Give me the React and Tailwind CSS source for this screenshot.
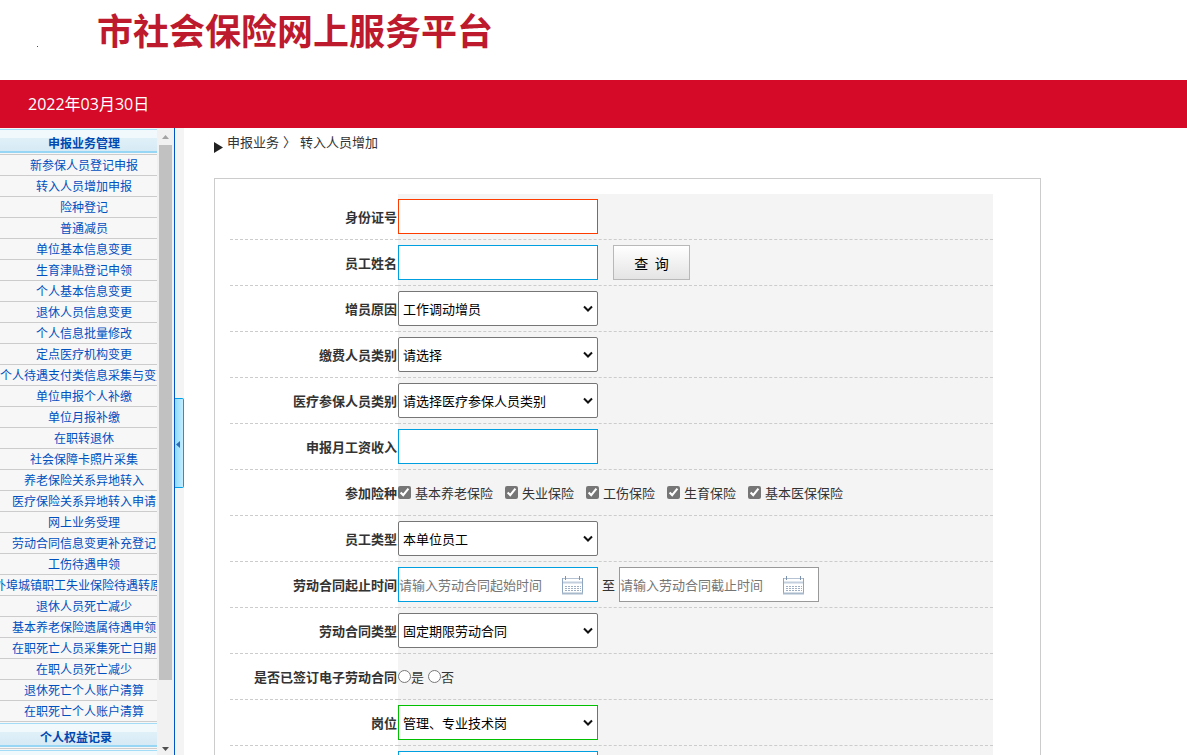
import { useState } from "react";

const menuItems = [
  "新参保人员登记申报",
  "转入人员增加申报",
  "险种登记",
  "普通减员",
  "单位基本信息变更",
  "生育津贴登记申领",
  "个人基本信息变更",
  "退休人员信息变更",
  "个人信息批量修改",
  "定点医疗机构变更",
  "个人待遇支付类信息采集与变更",
  "单位申报个人补缴",
  "单位月报补缴",
  "在职转退休",
  "社会保障卡照片采集",
  "养老保险关系异地转入",
  "医疗保险关系异地转入申请",
  "网上业务受理",
  "劳动合同信息变更补充登记",
  "工伤待遇申领",
  "外埠城镇职工失业保险待遇转原籍",
  "退休人员死亡减少",
  "基本养老保险遗属待遇申领",
  "在职死亡人员采集死亡日期",
  "在职人员死亡减少",
  "退休死亡个人账户清算",
  "在职死亡个人账户清算",
];

const insurances = ["基本养老保险", "失业保险", "工伤保险", "生育保险", "基本医保保险"];

function MenuHeader({ children, className = "" }) {
  return (
    <div className="border-b border-[#ccc] bg-[#f7f7f7] py-px">
      <button
        className={`flex h-6 w-full items-center justify-center border-t border-b-2 border-t-[#a3dcf7] border-b-[#97d7f5] bg-linear-to-b from-[#f2f9fd] from-40% via-[#e0f0f9] via-40% to-[#d6eaf5] pt-1 leading-none font-bold text-[#0048b0] ${className}`}
      >
        {children}
      </button>
    </div>
  );
}

function Sidebar() {
  return (
    <aside className="flex w-[175px] shrink-0 border-r border-[#0054c4] bg-[#f1f1f1]">
      <nav className="w-[157px] overflow-hidden text-xs">
        <div className="w-[168px]">
          <MenuHeader>申报业务管理</MenuHeader>
          <ul>
            {menuItems.map((item) => (
              <li key={item} className="h-[21px] border-b border-[#ccc] bg-[#f7f7f7]">
                <a href="#" className="flex h-5 items-center justify-center whitespace-nowrap text-[#0050c0]">
                  {item}
                </a>
              </li>
            ))}
          </ul>
          <MenuHeader className="pr-4">个人权益记录</MenuHeader>
          <MenuHeader>单位信息查询</MenuHeader>
        </div>
      </nav>
      <div className="flex flex-1 flex-col items-center">
        <svg className="h-[17px] w-[9px] shrink-0" viewBox="0 0 9 17">
          <path d="M1 11h7L4.500 7z" fill="#a3a3a3" />
        </svg>
        <div className="flex w-[13px] flex-1 flex-col">
          <div className="grow-[535] bg-[#c1c1c1]" />
          <div className="grow-[58]" />
        </div>
        <svg className="h-[17px] w-[9px] shrink-0" viewBox="0 0 9 17">
          <path d="M1 9h7L4.500 13z" fill="#505050" />
        </svg>
      </div>
    </aside>
  );
}

function Row({ label, id, children }) {
  return (
    <tr className="h-[46px]">
      <th className="w-[168px] border-b border-dashed border-[#ccc] p-0 pr-px text-right align-middle font-bold whitespace-nowrap">
        <label htmlFor={id}>{label}</label>
      </th>
      <td className="border-b border-dashed border-[#ccc] bg-[#f4f4f4] p-0 align-middle">
        <div className="flex items-center">{children}</div>
      </td>
    </tr>
  );
}

function TextBox({ id, className }) {
  return <input id={id} type="text" className={`h-[35px] w-[200px] border bg-white px-1 ${className}`} />;
}

function SelectBox({ id, options, className = "rounded-xs border-[#767676]" }) {
  return (
    <div className="relative">
      <select id={id} className={`h-[35px] w-[200px] appearance-none border bg-white px-1 text-black ${className}`}>
        {options.map((o) => (
          <option key={o}>{o}</option>
        ))}
      </select>
      <svg className="pointer-events-none absolute top-[14px] right-[5px] h-2 w-2.5" viewBox="0 0 10 8" fill="none">
        <path d="M1 1.500L5 5.500L9 1.500" stroke="#111" strokeWidth="2" />
      </svg>
    </div>
  );
}

function CalendarIcon() {
  return (
    <svg className="pointer-events-none absolute top-[9px] right-[14px] h-[19px] w-[23px]" viewBox="0 0 23 19" fill="none">
      <path d="M1 2.500H22" stroke="#b4c2d3" />
      <path d="M1 6.500H22" stroke="#c3cfdc" strokeWidth="2" />
      <path d="M1.500 2V18M21.500 2V18" stroke="#8fa5c0" />
      <path d="M1 17.500H22" stroke="#a9b9cc" strokeWidth="2" />
      <path d="M4.500 0V4M18.500 0V4" stroke="#7d93ae" />
      <path d="M4 10.500H20M4 12.500H20M4 14.500H20" stroke="#9fb0c6" strokeDasharray="2 1" />
    </svg>
  );
}

function DateBox({ id, label, placeholder, className }) {
  return (
    <div className="relative">
      <input
        id={id}
        type="text"
        aria-label={label}
        placeholder={placeholder}
        className={`h-[35px] w-[200px] border bg-white placeholder:text-[#757575] ${className}`}
      />
      <CalendarIcon />
    </div>
  );
}

function App() {
  const [checked, setChecked] = useState(insurances);
  const [signed, setSigned] = useState("");

  const toggle = (name) => {
    setChecked(checked.includes(name) ? checked.filter((c) => c !== name) : [...checked, name]);
  };

  return (
    <div className="flex h-screen flex-col overflow-hidden bg-white font-['Noto_Sans_CJK_SC',sans-serif] text-[13px] text-[#333]">
      <header className="shrink-0">
        <div className="flex h-20 items-start pt-1 pl-[37px]">
          <span className="mt-[42px] h-px w-px bg-[#be1a2e]" />
          <h1 className="ml-[59px] text-4xl leading-[50px] font-bold text-[#be1a2e]">市社会保险网上服务平台</h1>
        </div>
        <div className="flex h-12 items-center bg-[#d40a28] pl-7 font-['Open_Sans','Noto_Sans_CJK_SC',sans-serif] text-base text-white">
          2022年03月30日
        </div>
      </header>

      <div className="flex min-h-0 flex-1">
        <Sidebar />

        <div className="flex w-[9px] shrink-0 flex-col justify-center bg-[#f4f4f4] pt-0.5">
          <button
            aria-label="收起菜单"
            className="flex h-[90px] items-center rounded-r-xs border border-l-0 border-[#00a0e9] bg-linear-to-r from-[#8fdcff] to-[#c4edff] pt-1 pl-px"
          >
            <svg className="h-[7px] w-1" viewBox="0 0 4 7">
              <path d="M4 0V7L0 3.500z" fill="#2f6bb5" />
            </svg>
          </button>
        </div>

        <main className="min-w-0 flex-1 overflow-hidden px-[30px]">
          <div className="flex h-[50px] items-start gap-1 pt-1">
            <svg className="mt-2.5 h-[11px] w-[9px]" viewBox="0 0 9 11">
              <path d="M0 0V11L9 5.500z" fill="#222" />
            </svg>
            <div className="flex leading-5">
              <a href="#">申报业务</a>
              <span className="px-1">〉</span>
              <span>转入人员增加</span>
            </div>
          </div>

          <form className="max-w-[827px] border border-[#ccc] py-[15px] pr-[47px] pl-[15px]">
            <table className="w-full border-separate border-spacing-0">
              <tbody>
                <Row label="身份证号" id="idcard">
                  <TextBox id="idcard" className="border-[#ff3c00]" />
                </Row>
                <Row label="员工姓名" id="name">
                  <TextBox id="name" className="border-[#00a0e0]" />
                  <button
                    type="button"
                    className="ml-[15px] h-[35px] w-[77px] border border-[#b8b8b8] bg-linear-to-b from-white to-[#e4e4e4] text-sm whitespace-pre text-black"
                  >
                    {"查  询"}
                  </button>
                </Row>
                <Row label="增员原因" id="reason">
                  <SelectBox id="reason" options={["工作调动增员"]} />
                </Row>
                <Row label="缴费人员类别" id="payType">
                  <SelectBox id="payType" options={["请选择"]} />
                </Row>
                <Row label="医疗参保人员类别" id="medType">
                  <SelectBox id="medType" options={["请选择医疗参保人员类别"]} />
                </Row>
                <Row label="申报月工资收入" id="salary">
                  <TextBox id="salary" className="border-[#00a0e0]" />
                </Row>
                <Row label="参加险种">
                  <div className="flex gap-3">
                    {insurances.map((name) => (
                      <label key={name} className="flex items-center gap-1">
                        <input
                          type="checkbox"
                          checked={checked.includes(name)}
                          onChange={() => toggle(name)}
                          className="h-[13px] w-[13px] accent-[#767676]"
                        />
                        {name}
                      </label>
                    ))}
                  </div>
                </Row>
                <Row label="员工类型" id="empType">
                  <SelectBox id="empType" options={["本单位员工"]} />
                </Row>
                <Row label="劳动合同起止时间" id="startDate">
                  <DateBox id="startDate" placeholder="请输入劳动合同起始时间" className="border-[#00a0e0]" />
                  <span className="px-1">至</span>
                  <DateBox id="endDate" label="劳动合同截止时间" placeholder="请输入劳动合同截止时间" className="border-[#999]" />
                </Row>
                <Row label="劳动合同类型" id="contractType">
                  <SelectBox id="contractType" options={["固定期限劳动合同"]} />
                </Row>
                <Row label="是否已签订电子劳动合同">
                  <div className="flex gap-1">
                    {["是", "否"].map((v) => (
                      <label key={v} className="flex items-center">
                        <input
                          type="radio"
                          name="signed"
                          checked={signed === v}
                          onChange={() => setSigned(v)}
                          className="h-[13px] w-[13px]"
                        />
                        {v}
                      </label>
                    ))}
                  </div>
                </Row>
                <Row label="岗位" id="post">
                  <SelectBox id="post" options={["管理、专业技术岗"]} className="border-[#00c000]" />
                </Row>
                <Row label="联系电话" id="phone">
                  <TextBox id="phone" className="border-[#00a0e0]" />
                </Row>
              </tbody>
            </table>
          </form>
        </main>
      </div>
    </div>
  );
}

export default App;
